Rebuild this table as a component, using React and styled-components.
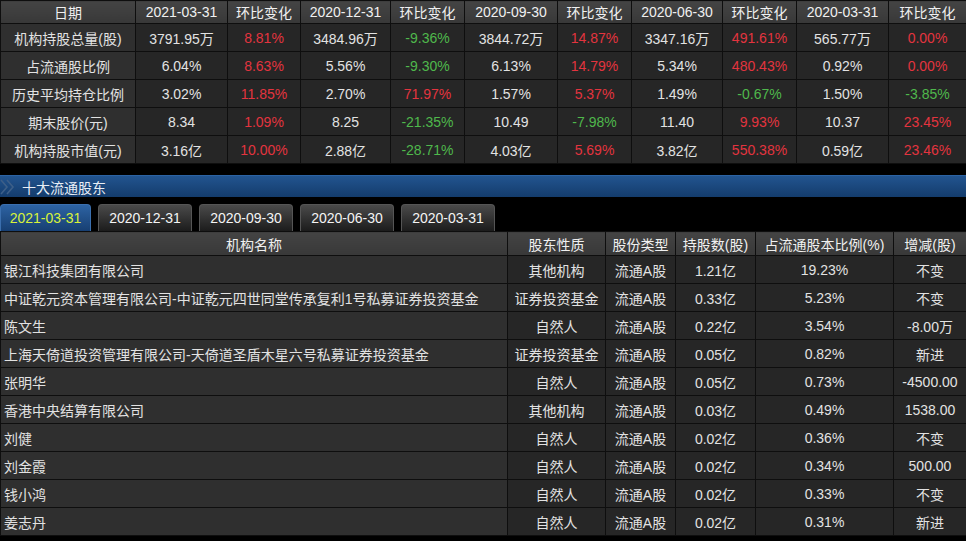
import { useState } from "react";
import styled, { createGlobalStyle } from "styled-components";

let GlobalStyle = createGlobalStyle`
    body {
        margin: 0;
        background: #000;
        font-family: "Liberation Sans", "Noto Sans CJK SC", sans-serif;
        font-size: 14px;
        color: #e2e2e2;
    }
`;

let Page = styled.div`
    width: 966px;
    height: 541px;
    background: #000;
    overflow: hidden;
`;

let Grid = styled.table`
    width: 966px;
    table-layout: fixed;
    border-collapse: collapse;
    td, th {
        border: 1px solid #0e0e0e;
        padding: 0;
        white-space: nowrap;
        overflow: hidden;
    }
`;

let HeadCell = styled.th`
    height: ${(p) => p.$h || 22}px;
    background: linear-gradient(#444, #383838);
    color: #f0f0f0;
    font-weight: normal;
    text-align: center;
`;

let Cell = styled.td`
    height: 27px;
    background: ${(p) => (p.$label ? "#2f2f2f" : "#262626")};
    color: ${(p) => (p.$tone === "up" ? "#e3343f" : p.$tone === "down" ? "#4fb84c" : "#e2e2e2")};
    text-align: ${(p) => (p.$left ? "left" : "center")};
    padding-left: ${(p) => (p.$left ? "3px" : "0")} !important;
`;

let Gap = styled.div`
    height: ${(p) => p.$h}px;
`;

let SectionBar = styled.div`
    height: 21px;
    display: flex;
    align-items: center;
    gap: 6px;
    background: linear-gradient(#22548f, #143c6c);
    border-top: 1px solid #2c63a3;
    color: #e8eef6;
    font-size: 14px;
`;

let Tabs = styled.div`
    display: flex;
    gap: 7px;
    height: 27px;
    align-items: flex-end;
`;

let Tab = styled.button`
    width: ${(p) => (p.$first ? 91 : 94)}px;
    height: 27px;
    padding: 0;
    border: 1px solid ${(p) => (p.$active ? "#3b6fae" : "#555")};
    border-bottom: 0;
    border-radius: 4px 4px 0 0;
    background: ${(p) => (p.$active ? "linear-gradient(#2d63a3, #173f72)" : "linear-gradient(#4a4a4a, #1c1c1c)")};
    color: ${(p) => (p.$active ? "#d8f23a" : "#f4f4f4")};
    font-family: "Liberation Sans", "Noto Sans CJK SC", sans-serif;
    font-size: 14px;
    cursor: pointer;
`;

let summaryCols = [135, 92, 73, 90, 74, 93, 74, 91, 74, 92, 78];
let summaryHead = ["日期", "2021-03-31", "环比变化", "2020-12-31", "环比变化", "2020-09-30", "环比变化", "2020-06-30", "环比变化", "2020-03-31", "环比变化"];
let summaryRows = [
    ["机构持股总量(股)", "3791.95万", "8.81%", "3484.96万", "-9.36%", "3844.72万", "14.87%", "3347.16万", "491.61%", "565.77万", "0.00%"],
    ["占流通股比例", "6.04%", "8.63%", "5.56%", "-9.30%", "6.13%", "14.79%", "5.34%", "480.43%", "0.92%", "0.00%"],
    ["历史平均持仓比例", "3.02%", "11.85%", "2.70%", "71.97%", "1.57%", "5.37%", "1.49%", "-0.67%", "1.50%", "-3.85%"],
    ["期末股价(元)", "8.34", "1.09%", "8.25", "-21.35%", "10.49", "-7.98%", "11.40", "9.93%", "10.37", "23.45%"],
    ["机构持股市值(元)", "3.16亿", "10.00%", "2.88亿", "-28.71%", "4.03亿", "5.69%", "3.82亿", "550.38%", "0.59亿", "23.46%"],
];

let holderCols = [507, 98, 70, 80, 138, 73];
let holderHead = ["机构名称", "股东性质", "股份类型", "持股数(股)", "占流通股本比例(%)", "增减(股)"];
let holderRows = [
    ["银江科技集团有限公司", "其他机构", "流通A股", "1.21亿", "19.23%", "不变"],
    ["中证乾元资本管理有限公司-中证乾元四世同堂传承复利1号私募证券投资基金", "证券投资基金", "流通A股", "0.33亿", "5.23%", "不变"],
    ["陈文生", "自然人", "流通A股", "0.22亿", "3.54%", "-8.00万"],
    ["上海天倚道投资管理有限公司-天倚道圣盾木星六号私募证券投资基金", "证券投资基金", "流通A股", "0.05亿", "0.82%", "新进"],
    ["张明华", "自然人", "流通A股", "0.05亿", "0.73%", "-4500.00"],
    ["香港中央结算有限公司", "其他机构", "流通A股", "0.03亿", "0.49%", "1538.00"],
    ["刘健", "自然人", "流通A股", "0.02亿", "0.36%", "不变"],
    ["刘金霞", "自然人", "流通A股", "0.02亿", "0.34%", "500.00"],
    ["钱小鸿", "自然人", "流通A股", "0.02亿", "0.33%", "不变"],
    ["姜志丹", "自然人", "流通A股", "0.02亿", "0.31%", "新进"],
];

let dates = ["2021-03-31", "2020-12-31", "2020-09-30", "2020-06-30", "2020-03-31"];

function tone(text, idx) {
    if (idx === 0 || idx % 2 === 1) return null;
    return text.startsWith("-") ? "down" : "up";
}

function Chevrons() {
    return (
        <svg width="16" height="20" viewBox="0 0 16 20">
            <polyline points="1,3 7,10 1,17" fill="none" stroke="#3d5f88" strokeWidth="1.6" />
            <polyline points="7,3 13,10 7,17" fill="none" stroke="#3d5f88" strokeWidth="1.6" />
        </svg>
    );
}

function App() {
    let [active, setActive] = useState(0);

    return (
        <Page>
            <GlobalStyle />
            <Grid>
                <colgroup>
                    {summaryCols.map((w, i) => <col key={i} style={{ width: w }} />)}
                </colgroup>
                <thead>
                    <tr>{summaryHead.map((h, i) => <HeadCell key={i}>{h}</HeadCell>)}</tr>
                </thead>
                <tbody>
                    {summaryRows.map((row, r) => (
                        <tr key={r}>
                            {row.map((v, i) => (
                                <Cell key={i} $label={i === 0} $tone={tone(v, i)}>{v}</Cell>
                            ))}
                        </tr>
                    ))}
                </tbody>
            </Grid>
            <Gap $h={11} />
            <SectionBar>
                <Chevrons />
                十大流通股东
            </SectionBar>
            <Gap $h={7} />
            <Tabs>
                {dates.map((d, i) => (
                    <Tab key={d} $first={i === 0} $active={i === active} onClick={() => setActive(i)}>{d}</Tab>
                ))}
            </Tabs>
            <Grid>
                <colgroup>
                    {holderCols.map((w, i) => <col key={i} style={{ width: w }} />)}
                </colgroup>
                <thead>
                    <tr>{holderHead.map((h, i) => <HeadCell key={i} $h={23}>{h}</HeadCell>)}</tr>
                </thead>
                <tbody>
                    {holderRows.map((row, r) => (
                        <tr key={r}>
                            {row.map((v, i) => (
                                <Cell key={i} $left={i === 0} $label={i === 0}>{v}</Cell>
                            ))}
                        </tr>
                    ))}
                </tbody>
            </Grid>
        </Page>
    );
}

export default App;
